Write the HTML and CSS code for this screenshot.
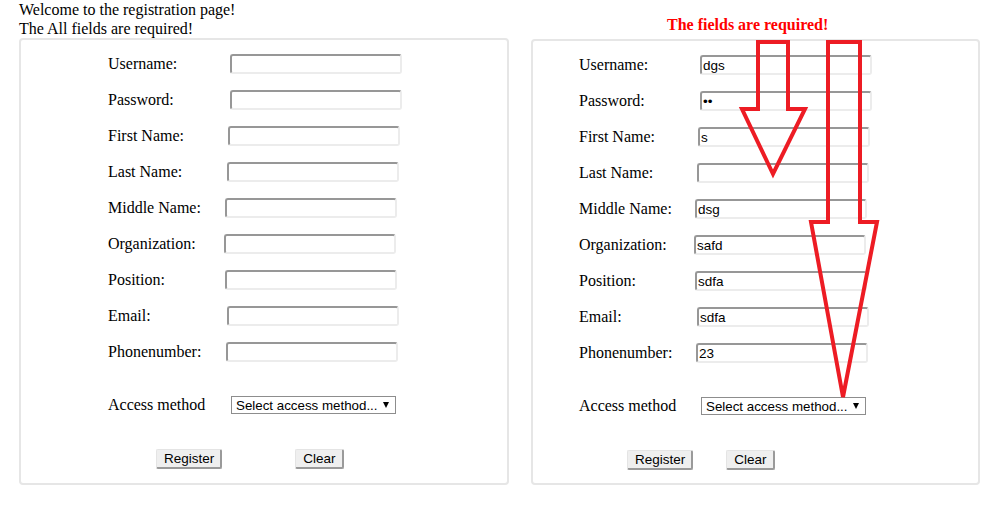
FILE: index.html
```html
<!DOCTYPE html>
<html>
<head>
<meta charset="utf-8">
<link rel="stylesheet" href="styles.css">
</head>
<body>
<div class="page">
  <div class="col col-left">
    <p class="intro">Welcome to the registration page!<br>The All fields are required!</p>
    <form class="panel">
      <div class="row f-user"><label>Username:</label><input class="input" type="text"></div>
      <div class="row f-pass"><label>Password:</label><input class="input" type="password"></div>
      <div class="row f-first"><label>First Name:</label><input class="input" type="text"></div>
      <div class="row f-last"><label>Last Name:</label><input class="input" type="text"></div>
      <div class="row f-middle"><label>Middle Name:</label><input class="input" type="text"></div>
      <div class="row f-org"><label>Organization:</label><input class="input" type="text"></div>
      <div class="row f-pos"><label>Position:</label><input class="input" type="text"></div>
      <div class="row f-email"><label>Email:</label><input class="input" type="text"></div>
      <div class="row f-phone"><label>Phonenumber:</label><input class="input" type="text"></div>
      <div class="row access"><label>Access method</label><div class="select"><span>Select access method...</span><i class="caret"></i></div></div>
      <div class="row buttons"><button type="button" class="btn">Register</button><button type="button" class="btn btn-clear">Clear</button></div>
    </form>
  </div>
  <div class="col col-right">
    <h2 class="warn">The fields are required!</h2>
    <form class="panel">
      <div class="row f-user"><label>Username:</label><input class="input" type="text" value="dgs"></div>
      <div class="row f-pass"><label>Password:</label><input class="input" type="password" value="12"></div>
      <div class="row f-first"><label>First Name:</label><input class="input" type="text" value="s"></div>
      <div class="row f-last"><label>Last Name:</label><input class="input" type="text"></div>
      <div class="row f-middle"><label>Middle Name:</label><input class="input" type="text" value="dsg"></div>
      <div class="row f-org"><label>Organization:</label><input class="input" type="text" value="safd"></div>
      <div class="row f-pos"><label>Position:</label><input class="input" type="text" value="sdfa"></div>
      <div class="row f-email"><label>Email:</label><input class="input" type="text" value="sdfa"></div>
      <div class="row f-phone"><label>Phonenumber:</label><input class="input" type="text" value="23"></div>
      <div class="row access"><label>Access method</label><div class="select"><span>Select access method...</span><i class="caret"></i></div></div>
      <div class="row buttons"><button type="button" class="btn">Register</button><button type="button" class="btn btn-clear">Clear</button></div>
    </form>
  </div>
  <svg class="arrows" width="1005" height="506" viewBox="0 0 1005 506">
    <polygon points="758,42 788,42 788,109 805,109 773,174 742,109 758,109" />
    <polygon points="828,42 860,42 860,222 877,222 843,397 811,222 828,222" />
  </svg>
</div>
</body>
</html>
```
FILE: styles.css
```css
body {
  margin: 0;
  background: #fff;
  color: #000;
  font-family: "Liberation Serif", "Times New Roman", serif;
  font-size: 16px;
}

.page {
  position: relative;
  display: flex;
  align-items: flex-start;
  width: 1005px;
  height: 506px;
  padding-left: 19px;
  box-sizing: border-box;
}

.col-left {
  width: 490px;
  flex: none;
}

.col-right {
  width: 449px;
  margin-left: 22px;
  flex: none;
}

.intro {
  margin: 0;
  padding-top: 1px;
  line-height: 18.5px;
}

.warn {
  margin: 16px 0 5px 136px;
  font-size: 16px;
  line-height: 18px;
  font-weight: bold;
  color: #ff0000;
}

.panel {
  border: 2px solid #e6e6e6;
  border-radius: 4px;
  padding: 6px 0 6px 87px;
  margin: 0;
}

.col-right .panel {
  padding: 6px 0 5px 46px;
}

.row {
  display: flex;
  align-items: center;
  height: 36px;
}

.row label {
  width: 116px;
  flex: none;
}

.col-right .row label {
  width: 115px;
}

.input {
  width: 172px;
  height: 20px;
  box-sizing: border-box;
  margin: 0;
  border: 2px solid;
  border-color: #979797 #ececec #ececec #979797;
  border-radius: 3px;
  padding: 1px 1px;
  background: #fff;
  color: #000;
  font-family: "Liberation Sans", Arial, sans-serif;
  font-size: 13.5px;
}

.f-user .input,
.f-pass .input { margin-left: 6px; }
.f-first .input { margin-left: 4px; }
.f-last .input { margin-left: 3px; }
.f-middle .input { margin-left: 1px; }
.f-org .input { margin-left: 0; }
.f-pos .input { margin-left: 1px; }
.f-email .input { margin-left: 3px; }
.f-phone .input { margin-left: 2px; }

.access {
  margin-top: 17px;
}

.select {
  display: flex;
  align-items: center;
  width: 165px;
  height: 18px;
  box-sizing: border-box;
  margin-left: 7px;
  padding: 0 6px 0 4px;
  border: 1px solid #8d8d8d;
  background: #fff;
  font-family: "Liberation Sans", Arial, sans-serif;
  font-size: 13.33px;
  white-space: nowrap;
}

.caret {
  margin-left: auto;
  width: 0;
  height: 0;
  border-left: 3.5px solid transparent;
  border-right: 3.5px solid transparent;
  border-top: 6px solid #000;
}

.buttons {
  margin-top: 18px;
  padding-left: 48px;
}

.btn {
  height: 20px;
  box-sizing: border-box;
  margin: 0;
  padding: 0 6px 0 7px;
  border: 1px solid;
  border-width: 1px 2px 2px 1px;
  border-color: #e4e4e4 #9a9a9a #9a9a9a #e4e4e4;
  border-radius: 2px;
  background: #efefef;
  color: #000;
  font-family: "Liberation Sans", Arial, sans-serif;
  font-size: 13.5px;
  line-height: 16px;
}

.col-left .btn-clear { margin-left: 73px; }
.col-right .btn-clear { margin-left: 33px; }

.arrows {
  position: absolute;
  left: 0;
  top: 0;
  pointer-events: none;
}

.arrows polygon {
  fill: none;
  stroke: #ed1c24;
  stroke-width: 4;
  stroke-linejoin: miter;
}
```
